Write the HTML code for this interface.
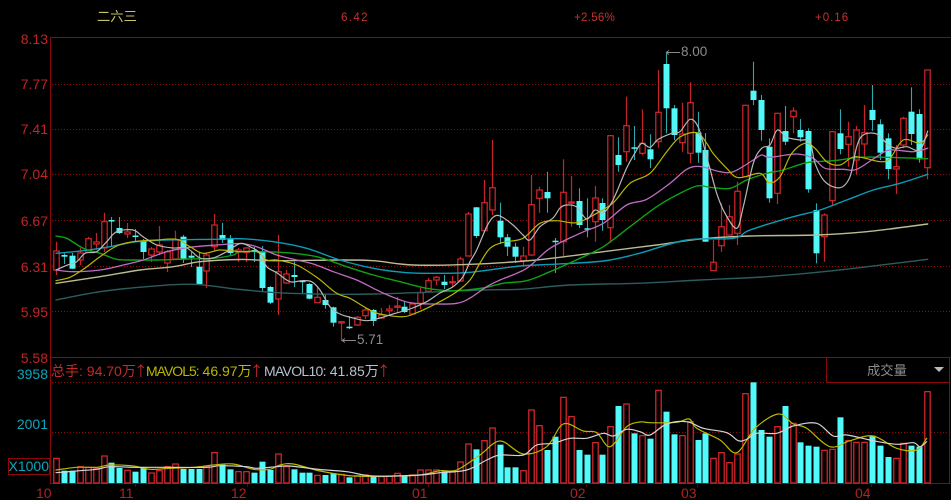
<!DOCTYPE html>
<html><head><meta charset="utf-8"><style>
html,body{margin:0;padding:0;background:#000;width:951px;height:500px;overflow:hidden}
#w{position:relative;width:951px;height:500px;background:#000;font-family:"Liberation Sans","WenQuanYi Zen Hei","Noto Sans CJK SC",sans-serif;overflow:hidden}
svg{position:absolute;left:0;top:0}
#s{filter:blur(.3px)}
.t{position:absolute;white-space:nowrap;line-height:16px;height:16px;filter:blur(.25px)}
.r{color:#c02426;font-size:14px;right:903px;text-align:right}
.c{color:#0aa6bc;font-size:14px;right:903px;text-align:right}
.d{color:#b02222;font-size:14px}
.top{font-size:11.5px;letter-spacing:1.4px;color:#c93030;top:10px}
.u{display:inline-block;width:8px;text-indent:-3px;overflow:visible;color:#c42a2a;font-family:"Noto Sans CJK SC",sans-serif;margin-left:1px}
</style></head><body><div id="w">
<svg width="951" height="500" xmlns="http://www.w3.org/2000/svg">
<g fill="none" stroke="#8c0808" stroke-width="1">
<path d="M50.5 37.5H951M50.5 37V484M50.5 357.5H951M50.5 483.5H951M949.5 357V484M826.5 358V382.5H949"/>
<path stroke-dasharray="1 2" stroke="#900c0c" d="M52 84.5H951M52 129.5H951M52 174.5H951M52 220.5H951M52 266.5H951M52 311.5H951M52 382.5H826M52 432.5H951"/>
<path stroke="#5a0a0a" d="M135.5 483V487M247.5 483V487M428.5 483V487M586.5 483V487M697.5 483V487M871.5 483V487"/>
<rect x="8.5" y="458.5" width="41" height="16"/>
</g>
<path d="M934 367h10l-5 5z" fill="#bbb"/>
</svg>
<svg id="s" width="951" height="500" xmlns="http://www.w3.org/2000/svg">
<g id="cd"></g><g id="vb"></g><g id="ln" fill="none" stroke-linejoin="round" stroke-linecap="round"></g>
<g fill="none" stroke="#8a8a8a" stroke-width="1"><path d="M666 52.5H680M666 52.5l3-2M666 52.5l3 2M342 340.5H356M342 340.5l3-2M342 340.5l3 2"/></g>
</svg>
<div class="t top" style="left:97px;top:9px;color:#c4c46c;font-size:13.3px;letter-spacing:0">二六三</div>
<div class="t top" style="left:341px">6.42</div>
<div class="t top" style="left:574px;letter-spacing:.3px">+2.56%</div>
<div class="t top" style="left:815px;letter-spacing:1px">+0.16</div>
<div class="t r" style="top:31px">8.13</div>
<div class="t r" style="top:76px">7.77</div>
<div class="t r" style="top:121px">7.41</div>
<div class="t r" style="top:166px">7.04</div>
<div class="t r" style="top:213px">6.67</div>
<div class="t r" style="top:259px">6.31</div>
<div class="t r" style="top:304px">5.95</div>
<div class="t r" style="top:350px">5.58</div>
<div class="t c" style="top:366px">3958</div>
<div class="t c" style="top:416px">2001</div>
<div class="t c" style="top:458px;right:902px">X1000</div>
<div class="t" style="left:51px;top:363px;font-size:14px;color:#c42a2a">总手: 94.70万<span class="u">↑</span></div>
<div class="t" style="left:146px;top:363px;font-size:14px;color:#b8b800"><span style="letter-spacing:-1px">MAVOL5:</span> 46.97万<span class="u">↑</span></div>
<div class="t" style="left:264px;top:363px;font-size:14px;color:#b8c0cc"><span style="letter-spacing:-.7px">MAVOL10:</span> 41.85万<span class="u">↑</span></div>
<div class="t" style="left:867px;top:363px;font-size:13.3px;color:#8c8c8c">成交量</div>
<div class="t" style="left:681px;top:44px;font-size:13.5px;color:#8c8c8c">8.00</div>
<div class="t" style="left:357px;top:332px;font-size:13.5px;color:#8c8c8c">5.71</div>
<div class="t d" style="left:36px;top:485px">10</div>
<div class="t d" style="left:119px;top:485px">11</div>
<div class="t d" style="left:231px;top:485px">12</div>
<div class="t d" style="left:412px;top:485px">01</div>
<div class="t d" style="left:570px;top:485px">02</div>
<div class="t d" style="left:681px;top:485px">03</div>
<div class="t d" style="left:855px;top:485px">04</div>
<script>
var NS="http://www.w3.org/2000/svg";
function el(p,n,a){var e=document.createElementNS(NS,n);for(var k in a)e.setAttribute(k,a[k]);document.getElementById(p).appendChild(e);return e}
function X(i){return 56+7.92*i}
var C="r 241.7 251 270 275|c 253.3 255 256.7 264|c 253 255.7 268.7 269|r 248 253 260 265|r 236.7 238.7 252 253|r 233 242 244 250|r 212.7 221.7 248 252|c 217 220 221 246|c 217 228 233 234|r 223 232 234 238|c 229 235.5 236.5 241|c 239 241 252 259|r 247 249 255 262|r 226 245 252 255|r 250 251.7 263 272|r 230.7 240 259 259|c 235 236.7 259 263|c 251.7 255.7 257.7 267|c 251.7 266.7 284 285|r 253 255 271 288|r 214 225 246.7 251.7|c 222.7 235 240 243|c 235 239 253 255|r 248 250 252 262|r 247 248 252.5 262|c 247 250 251 262|c 246 252 288 291|c 286 287 302.7 304|r 235 271.7 299 315|r 270 274 283 284|c 261.7 275 277 287|c 280 280.7 281.7 293|c 283 284 298.7 299.3|r 287 297.3 302.7 303|c 294 300 305 308.7|c 306.7 307.3 322.7 326.7|r 321.7 321.7 323 341|c 316 326.7 327.7 329|r 316 317.3 325 326|r 307 310 315.7 319.3|c 309 310 321 326|r 308 315 318 319|r 305 309 310.7 315|r 297 306 307.3 313|c 301.7 306.7 312 313|r 303 304 314 314|r 288 292.7 303.3 309|r 278 280.7 291.3 292|r 276 277.3 280 285|c 275 281.7 285 289|r 276 281.7 282.3 286.7|r 256.7 259 281 281.7|r 212 214 256 256|c 207 207.3 236 238|r 180 202.7 230.7 231|r 140 187.7 210 215|c 202.7 220.7 237.3 244|c 234 237.3 246.7 256|c 242.7 246.7 256.7 263|r 246.7 256 260.7 266|r 175 204.7 255 256|r 186.7 190 198.3 212.7|c 171.7 192 198.3 212.7|c 238 240.7 241.3 273|r 159.3 192.3 241.7 256.7|r 176 202 202.7 226.7|c 188.3 201 225 228|c 198.3 228.3 229 237.3|r 186 198 221.7 241.7|c 198.3 203 220 230.7|r 135 135.7 227.7 242.7|c 137.3 155 165 171.7|r 96.7 125.7 151.7 161.7|c 126 147.3 148.3 160|r 109.3 143.3 153.3 155|c 134.3 149.3 159.3 168|r 70 112.3 141.7 147.7|c 53.3 64 108.3 133.3|c 105 108.3 135 140|r 102.7 134 142.7 151.7|r 82.3 102.7 153.3 163|c 111.7 132.7 152.7 162.7|c 133 150 241.7 241.7|r 240 262.3 270.7 270.7|r 203.3 226.7 245.7 251.7|r 205 216.7 235 235|r 181.7 191.3 233.3 245|r 105 105.3 176.7 176.7|c 61.7 90.7 100 105|c 95 100 130 140.7|c 138.3 146.7 198.3 202.7|r 113.3 113.3 193.3 204|c 106 131 141.7 145|r 107.3 111 116.7 133.3|c 119 130 137.3 141.7|c 128.3 131 189.3 192.7|c 203.3 210 253.3 263.3|r 213.3 215 236.7 261.7|r 131 131.7 200.7 205|c 109.3 133.3 149 154.3|r 121.7 136.7 144.3 166.7|r 126 130 160 174.3|r 105 132.7 144 158.3|c 85 110 120 131|c 119.3 124.3 152.7 160|c 133.3 138.3 169 179.3|r 145 166.7 169 194|r 116.7 118.3 145 148.3|c 87.3 111.7 134 145|c 109.3 114 159.3 162.7|r 70 70 167.7 179.3".split("|");
C.forEach(function(s,i){var a=s.split(" "),x=X(i),h=+a[1],t=+a[2],b=+a[3],l=+a[4],red=a[0]=="r",xr=Math.round(x)+.5;
 if(red){
  el("cd","path",{d:"M"+xr+" "+h+"V"+t+"M"+xr+" "+b+"V"+l,stroke:"#c42428","stroke-width":1.2,fill:"none"});
  var H=Math.max(b-t,1.2);
  el("cd","rect",{x:xr-2.7,y:t,width:5.4,height:H,fill:"#000",stroke:"#d6262a","stroke-width":1.2});
 }else{
  el("cd","path",{d:"M"+xr+" "+h+"V"+l,stroke:"#2fa8ae","stroke-width":1.1,fill:"none"});
  el("cd","rect",{x:xr-3,y:t,width:6,height:Math.max(b-t,1.5),fill:"#52f8f8"});
 }
});
var V="r325 c362 c362 r350 r352 r355 r318 c338 c354 r361 c365 c354 r369 r362 r350 r342 c357 c357 c357 r349 r308 c344 c358 r365 r365 c368 c335 c360 r312 r350 c358 c368 c368 r376 c375 c370 r373 c382 r377 r375 c378 r380 r378 r370 c377 r375 r360 r360 r360 c364 r366 r336 r282 c298 r272 r234 c284 c352 c352 r362 r180 r227 c300 c260 r142 r200 c300 c314 r278 c314 r230 c168 r162 c250 r257 c266 r121 c185 c253 r257 r215 c270 c250 r325 r308 r338 r312 r131 c97 c240 c260 r230 c168 r220 c277 c287 c290 r301 r298 c202 r272 r277 r277 c257 c287 c321 r325 r280 c287 c290 r125".split(" ");
V.forEach(function(s,i){var x=Math.round(X(i))+.5,y=350+(+s.slice(1))/3;
 if(s[0]=="r")el("vb","rect",{x:x-2.7,y:y,width:5.4,height:483-y,fill:"#000",stroke:"#e0282c","stroke-width":1.2});
 else el("vb","rect",{x:x-3,y:y,width:6,height:483-y,fill:"#52fbfb"});
});
function path(str){var p=str.trim().split(/\s+/).map(function(q){return q.split(",").map(Number)}),d="M"+p[0][0]+" "+p[0][1];
 for(var i=0;i<p.length-1;i++){var a=p[i-1]||p[i],b=p[i],c=p[i+1],e=p[i+2]||c;
  d+="C"+(b[0]+(c[0]-a[0])/6).toFixed(1)+" "+(b[1]+(c[1]-a[1])/6).toFixed(1)+" "+(c[0]-(e[0]-b[0])/6).toFixed(1)+" "+(c[1]-(e[1]-b[1])/6).toFixed(1)+" "+c[0]+" "+c[1];}
 return d}
function L(col,w,s){var e=document.createElementNS(NS,"path");e.setAttribute("d",path(s));e.setAttribute("stroke",col);e.setAttribute("stroke-width",w);e.setAttribute("fill","none");e.setAttribute("stroke-linejoin","round");document.getElementById("ln").appendChild(e)}
L("#2c5c60",1.4,"56,300 100,291.7 146.7,286.7 193.3,284.3 240,289.5 290,293.3 373.3,294 480,290 520,289.3 570,285 636.7,283.3 700,280 766.7,276.7 833.3,270.7 927.7,259.3");
L("#bcbc92",1.4,"56,283.3 100,276.7 140,270 173.3,266.7 200,261.7 240,259.5 273.3,260.7 340,260 373.3,260.7 413.3,265 470,264.3 536.7,260 603.3,251.7 656.7,245 700,239 750,236 816.7,235 866.7,231.7 927.7,224");
L("#0a9cb6",1.4,"56,253.3 83.3,250.7 110,246.7 136.7,241.7 166.7,240 213.3,239.3 240,238.7 273.3,241.7 306.7,248.3 340,260 373.3,268.3 406.7,272.7 440,273.3 470,272.3 520,266 553.3,264.3 603.3,261 636.7,254 686.7,240 733.3,238.3 750,230 793.3,216.7 820,210 846.7,200 873.3,190 900,183.3 927.7,174.3");
L("#0ea214",1.4,"56,236 66.7,238.3 83.3,248.3 100,253.3 116.7,259.3 133.3,260 156.7,260 186.7,259 213.3,258.3 233.3,255 240,251.7 260,251.7 286.7,252.7 316.7,256.7 346.7,266.7 373.3,275 400,281.7 426.7,288.3 453.3,290.7 483,288 503,283.3 526.7,280.7 550,271.7 580,258.3 603.3,246.7 630,226.7 656.7,206.7 676.7,195 696.7,186 710,187.3 730,188.3 746.7,180 766.7,173.3 783.3,170 806.7,162.7 833.3,160.7 860,157.3 886.7,157.3 927.7,158.7");
L("#bf6cc4",1.3,"56,270 73.3,271.7 100,270 123.3,265 143.3,260 166.7,251.7 190,247.3 216.7,245 240,243.5 256.7,246.7 276.7,255 296.7,260 313.3,264 333.3,271.7 356.7,280 373.3,288.3 390,296 410,302.7 433.3,304 456.7,303.3 470,298 486.7,286.7 500,280 526.7,268.3 550,248.3 580,233.3 603.3,223.3 626.7,205 646.7,199.3 670,183.3 686.7,169.3 700,166.5 720,171.7 733.3,171.7 753.3,160 761.7,155 770,157.3 796.7,154 813.3,158.3 825,168.3 843.3,169.3 856.7,169.3 876.7,156.7 890,150 913.3,151.7 927.7,148.3");
L("#b8b800",1.2,"56,280.7 70,277.3 83.3,269.3 100,256.7 116.7,246 133,241.7 156.7,240 176.7,239.3 190,246.7 203,253.3 220,250 240,251.7 256.7,251.7 266.7,260 276.7,260 296.7,265 316.7,277.3 336.7,293.3 350,298.3 366.7,308.3 380,314 403,316.7 416.7,312.7 436.7,303.3 456.7,291.7 470,280 480,263 490,248.3 503.3,242.3 523,238.3 540,223.3 556.7,220.7 576.7,222.7 596.7,213.3 613.3,202.7 630,183.3 650,173.3 666.7,151.7 680,137 696.7,132.7 706.7,143.3 713,153.3 726.7,168.3 738.3,177.7 760,173.3 769,182.7 780,176.7 791.7,153.3 805,143.3 815,148.3 826.7,161.7 840,165 855,156.7 880,161.7 890,158.3 903.3,140 920,143.3 927.7,135");
L("#b8b8b8",1.2,"56,270 66.7,265.3 76.7,261.7 85,253.3 96.7,251.7 106.7,241.7 116.7,231.7 133,230 143,236.7 156.7,245 173,248 186.7,248 200,258 213,258 226.7,251.7 240,243.5 250,246.7 260,253 266.7,266.7 276.7,272.7 290,281.7 301.7,280.7 311.7,281.7 320,290 330,306.7 340,314 353,318 366.7,320.7 380,318 393,314 410,309 426.7,301.7 440,293 453,286.7 463,276.7 470,261.7 476.7,250 486.7,226.7 493,217.3 500,216 513,225 523,235 530,240 540,226.7 553,218 560,208 566.7,205 576.7,207 586.7,219 595,210 603.3,213 613,200 626.7,168 635,153 641.7,143.3 650,147.3 658.3,139.3 671.7,133.3 680,131.7 690,119.3 698.3,127.3 706.7,156.7 716.7,193.3 725,213.3 736.7,228.3 743.3,206.7 753.3,163.3 761.7,148.3 770,145 777.3,130 786.7,137.3 800,140 810,141.7 815,163.3 825,181.7 840,187.7 850,176.7 856.7,146.7 863.3,135 876.7,134 888.3,145 896.7,148.3 906.7,146.7 920,150 927.7,131");
L("#b8b800",1.2,"56,470 76.7,467.3 96.7,467.3 110,465 133.3,466 150,469.3 170,468.3 193.3,467.3 213.3,465 233.3,464 253.3,469.3 270,469.3 280,465 293.3,464 320,471 353.3,476 393.3,476 420,475 440,470.7 456.7,470 480,455 500,441 523.3,454 546.7,446.7 563.3,424 583.3,431 596.7,432.7 610,446.7 626.7,426.7 640,422 650,422.7 676.7,422.3 689.3,419 696.7,428.3 720,440 736.7,452.7 755,428.3 778.3,414 793.3,424 806.7,428.3 830,446.7 850,440.7 873.3,436 896.7,448.3 916.7,450 926.7,438.3");
L("#d4d4d4",1.2,"56,472.7 80,470.7 96.7,469.3 110,466.7 133.3,467.3 160,467.3 206.7,467.3 220,465.7 246.7,466.7 256.7,468.3 276.7,466.7 290,466 320,469.5 346.7,471.7 373.3,476 420,475 440,472.7 466.7,470 486.7,460 500,455 523.3,455 536.7,445 553.3,443.3 570,438.3 586.7,438.3 603.3,433.3 613.3,436 626.7,429.3 640,431.7 650,435 666.7,424 686.7,421.7 703.3,428.3 726.7,432.7 738.3,440.7 746.7,439.3 756.7,433.3 776.7,433.3 793.3,426 816.7,423.3 833.3,436 846.7,435 873.3,440.7 896.7,444.3 913.3,442.7 920,446.7 926.7,441.7");
</script>
</div></body></html>
